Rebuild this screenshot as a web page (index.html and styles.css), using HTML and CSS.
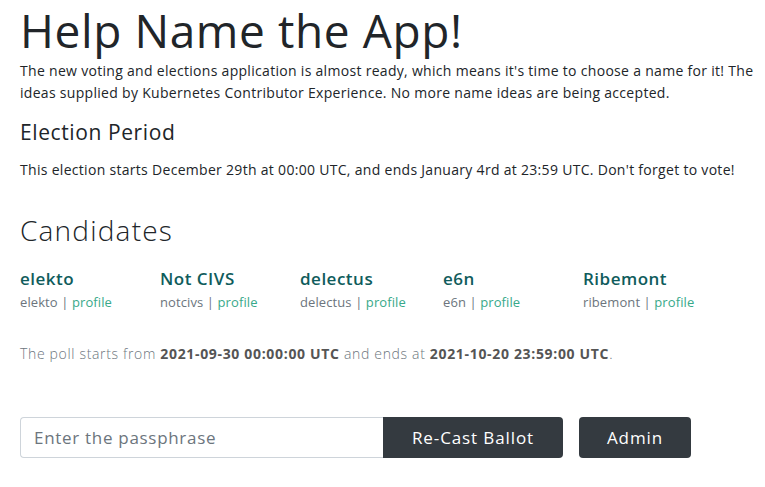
FILE: index.html
```html
<!DOCTYPE html>
<html>
<head>
<meta charset="utf-8">
<link rel="stylesheet" href="styles.css">
</head>
<body>
<main class="page">
  <h1 class="title">Help Name the App!</h1>
  <p class="lead">The new voting and elections application is almost ready, which means it's time to choose a name for it! The ideas supplied by Kubernetes Contributor Experience. No more name ideas are being accepted.</p>
  <h2 class="section-title">Election Period</h2>
  <p class="period">This election starts December 29th at 00:00 UTC, and ends January 4rd at 23:59 UTC. Don't forget to vote!</p>
  <h2 class="candidates-title">Candidates</h2>
  <div class="candidates">
    <div class="candidate"><div class="cand-name">elekto</div><div class="cand-meta">elekto | <a href="#">profile</a></div></div>
    <div class="candidate"><div class="cand-name">Not CIVS</div><div class="cand-meta">notcivs | <a href="#">profile</a></div></div>
    <div class="candidate"><div class="cand-name">delectus</div><div class="cand-meta">delectus | <a href="#">profile</a></div></div>
    <div class="candidate"><div class="cand-name">e6n</div><div class="cand-meta">e6n | <a href="#">profile</a></div></div>
    <div class="candidate"><div class="cand-name">Ribemont</div><div class="cand-meta">ribemont | <a href="#">profile</a></div></div>
  </div>
  <p class="poll">The poll starts from <b>2021-09-30 00:00:00 UTC</b> and ends at <b>2021-10-20 23:59:00 UTC</b>.</p>
  <form class="actions">
    <div class="input-group">
      <input class="pass" type="text" placeholder="Enter the passphrase">
      <button class="btn btn-joined" type="button">Re-Cast Ballot</button>
    </div>
    <button class="btn btn-admin" type="button">Admin</button>
  </form>
</main>
</body>
</html>
```

FILE: styles.css
```css
html, body { margin: 0; padding: 0; background: #fff; }
body {
  font-family: "Open Sans", "DejaVu Sans", sans-serif;
  color: #212529;
  width: 765px;
  overflow: hidden;
}
.page { padding: 0 0 0 20px; width: 760px; }
.title {
  margin: 0;
  padding-top: 0;
  font-size: 46px;
  font-weight: 500;
  line-height: 60px;
  letter-spacing: 0.6px;
  color: #212529;
}
.lead {
  margin: 0;
  font-size: 14px;
  line-height: 22px;
  letter-spacing: 0.3px;
  color: #212529;
}
.section-title {
  margin: 15px 0 0;
  font-size: 21px;
  font-weight: 500;
  line-height: 26px;
  letter-spacing: 0.6px;
  color: #212529;
}
.period {
  margin: 14px 0 0;
  font-size: 14px;
  line-height: 22px;
  letter-spacing: 0.3px;
}
.candidates-title {
  margin: 32px 0 0;
  font-size: 28px;
  font-weight: 300;
  line-height: 34px;
  letter-spacing: 1.2px;
}
.candidates { display: flex; margin-top: 20px; }
.candidate { width: 140px; }
.candidate:nth-child(4) { margin-left: 3px; }
.cand-name { font-size: 17px; font-weight: 600; color: #0f5c5c; line-height: 24px; letter-spacing: 0.5px; }
.cand-meta { font-size: 13px; color: #6c757d; line-height: 20px; margin-top: 1px; letter-spacing: 0.1px; }
.cand-meta a { color: #38a98a; text-decoration: none; }
.poll { margin: 31px 0 0; font-size: 14px; line-height: 22px; color: #6c757d; letter-spacing: 0.67px; font-weight: 300; }
.poll b { color: #555; font-weight: 700; }
.actions { display: flex; margin-top: 52px; gap: 16px; }
.input-group { display: flex; width: 543px; height: 41px; }
.pass {
  flex: 1;
  box-sizing: border-box;
  height: 41px;
  border: 1px solid #ced4da;
  border-right: 0;
  border-radius: 4px 0 0 4px;
  padding: 0 13px;
  font-family: inherit;
  font-size: 17px;
  letter-spacing: 0.7px;
  color: #495057;
  outline: none;
}
.pass::placeholder { color: #6c757d; }
.btn {
  box-sizing: border-box;
  height: 41px;
  border: 0;
  background: #343a40;
  color: #fff;
  font-family: inherit;
  font-size: 17px;
  letter-spacing: 0.9px;
  border-radius: 4px;
}
.btn-joined { width: 180px; border-radius: 0 4px 4px 0; }
.btn-admin { width: 112px; }
```
